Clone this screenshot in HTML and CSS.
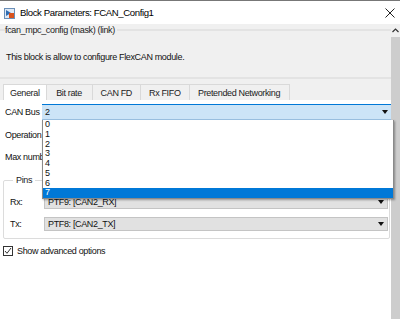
FILE: index.html
```html
<!DOCTYPE html>
<html>
<head>
<meta charset="utf-8">
<link rel="stylesheet" href="styles.css">
</head>
<body>
<div class="window">
  <div class="titlebar">
    <svg class="app-icon" width="11" height="11" viewBox="0 0 11 11">
      <rect x="0.5" y="0.5" width="10" height="10" fill="#dfe9f5" stroke="#6a8fb8"/>
      <path d="M2 2 L7 5 L2 8 Z" fill="#2f6db3"/>
      <rect x="5" y="5" width="5" height="5" fill="#d9531e"/>
    </svg>
    <span class="title">Block Parameters: FCAN_Config1</span>
    <svg class="close" width="10" height="10" viewBox="0 0 10 10">
      <path d="M0.5 0.5 L9.5 9.5 M9.5 0.5 L0.5 9.5" stroke="#222" stroke-width="1"/>
    </svg>
  </div>
  <div class="main">
    <div class="content">
      <div class="gray-area">
        <fieldset class="mask-group">
          <legend>fcan_mpc_config (mask) (link)</legend>
          <p class="desc">This block is allow to configure FlexCAN module.</p>
        </fieldset>
        <div class="tabs">
          <div class="tab active">General</div>
          <div class="tab">Bit rate</div>
          <div class="tab">CAN FD</div>
          <div class="tab">Rx FIFO</div>
          <div class="tab">Pretended Networking</div>
        </div>
      </div>
      <div class="panel">
        <div class="row row-canbus">
          <span class="label">CAN Bus</span>
          <div class="combo combo-active">
            <span>2</span>
            <span class="arrow"></span>
            <ul class="dropdown">
              <li>0</li>
              <li>1</li>
              <li>2</li>
              <li>3</li>
              <li>4</li>
              <li>5</li>
              <li>6</li>
              <li class="sel">7</li>
            </ul>
          </div>
        </div>
        <div class="row row-plain"><span class="label">Operation mode:</span></div>
        <div class="row row-plain"><span class="label">Max number of MBs:</span></div>
        <fieldset class="pins">
          <legend>Pins</legend>
          <div class="pin-row">
            <span class="pin-label">Rx:</span>
            <div class="combo combo-gray"><span>PTF9: [CAN2_RX]</span><span class="arrow"></span></div>
          </div>
          <div class="pin-row">
            <span class="pin-label">Tx:</span>
            <div class="combo combo-gray"><span>PTF8: [CAN2_TX]</span><span class="arrow"></span></div>
          </div>
        </fieldset>
        <label class="check">
          <span class="box">
            <svg width="8" height="8" viewBox="0 0 8 8"><path d="M1 4 L3 6.3 L7 1" fill="none" stroke="#333" stroke-width="1"/></svg>
          </span>
          <span>Show advanced options</span>
        </label>
      </div>
    </div>
    <div class="scrollbar">
      <div class="sb-up"><svg width="7" height="5" viewBox="0 0 7 5"><path d="M0.5 4 L3.5 1 L6.5 4" fill="none" stroke="#333" stroke-width="1.2"/></svg></div>
      <div class="sb-thumb"></div>
    </div>
  </div>
</div>
</body>
</html>
```

FILE: styles.css
```css
* { box-sizing: border-box; }
html, body { margin: 0; padding: 0; }
body {
  width: 400px;
  height: 319px;
  overflow: hidden;
  background: #fff;
  font-family: "Liberation Sans", Arial, sans-serif;
  font-size: 9px;
  letter-spacing: -0.35px;
  line-height: 10px;
  color: #111;
}
.window {
  width: 400px;
  height: 319px;
  display: flex;
  flex-direction: column;
  border-top: 1px solid #777;
}
.titlebar {
  height: 23px;
  flex: none;
  display: flex;
  align-items: center;
  padding: 0 0 0 4px;
  background: #fff;
}
.app-icon { flex: none; margin-right: 5px; margin-top: 1px; }
.title {
  font-size: 9.6px;
  letter-spacing: -0.4px;
  color: #000;
  flex: 1;
  margin-top: 1px;
}
.close { margin-right: 5px; margin-top: 1px; }
.main {
  flex: 1;
  display: flex;
  min-height: 0;
}
.content {
  flex: 1;
  display: flex;
  flex-direction: column;
  min-width: 0;
}
.gray-area {
  background: #f0f0f0;
  flex: none;
}
.mask-group {
  margin: 1px 0 0 0;
  border: none;
  border-top: 2px solid #e3e3e3;
  border-bottom: 2px solid #e3e3e3;
  padding: 0 6px;
  height: 54px;
  min-width: 0;
}
.mask-group legend {
  padding: 0 2px 0 0;
  margin-left: -1px;
  color: #222;
  line-height: 10px;
}
.desc { margin: 17px 0 0 0; }
.tabs {
  display: flex;
  padding: 5px 0 0 3px;
  height: 21px;
  align-items: flex-end;
}
.tab {
  height: 16px;
  padding: 0 8px;
  min-width: 46px;
  justify-content: center;
  border: 1px solid #d9d9d9;
  border-bottom: none;
  border-left: none;
  display: flex;
  align-items: center;
  background: #f0f0f0;
  color: #222;
}
.tab:first-child { border-left: 1px solid #d9d9d9; }
.tab.active {
  background: #fff;
  min-width: 43px;
  padding: 0 6px;
}
.tab:nth-child(3), .tab:nth-child(4) { min-width: 48px; }
.tab:nth-child(5) { min-width: 100px; }
.panel {
  flex: 1;
  background: #fff;
  position: relative;
  padding: 4px 0 0 0;
}
.row {
  display: flex;
  align-items: center;
  height: 16px;
  padding-left: 5px;
}
.row-plain { margin-top: 6px; }
.row-canbus + .row-plain { margin-top: 7px; }
.label { width: 37px; white-space: nowrap; flex: none; overflow: hidden; }
.combo {
  flex: 1;
  height: 16px;
  display: flex;
  align-items: center;
  padding-left: 3px;
  position: relative;
}
.combo-active {
  background: #cce4f7;
  border-top: 1px solid #0078d7;
  border-bottom: 1px solid #9cc3e5;
}
.arrow {
  margin-left: auto;
  margin-right: 3px;
  width: 0;
  height: 0;
  border-left: 3px solid transparent;
  border-right: 3px solid transparent;
  border-top: 4px solid #111;
}
.dropdown {
  position: absolute;
  left: 0;
  top: 15px;
  right: -3px;
  list-style: none;
  margin: 0;
  padding: 0;
  background: #fff;
  border: 1px solid #8a8a8a;
  border-top: none;
  box-shadow: 1px 1px 2px rgba(0,0,0,0.35);
  z-index: 5;
}
.dropdown li {
  height: 9.75px;
  line-height: 9.75px;
  padding-left: 2px;
  color: #111;
}
.dropdown li.sel { background: #0078d7; color: #fff; }
.pins {
  margin: 10px 1px 0 3px;
  border: 1px solid #dcdcdc;
  border-radius: 2px;
  padding: 0 0 0 6px;
  height: 64px;
  min-width: 0;
}
.pins legend {
  padding: 0 3px;
  margin-left: 3px;
  color: #222;
  line-height: 10px;
}
.pin-row {
  display: flex;
  align-items: center;
  height: 14px;
  margin-top: 10px;
}
.pin-row + .pin-row { margin-top: 8px; }
.pin-label { width: 34px; flex: none; }
.combo-gray {
  background: #e1e1e1;
  border: 1px solid #c4c4c4;
  height: 14px;
  margin-right: 1px;
}
.check {
  display: flex;
  align-items: center;
  margin: 7px 0 0 3px;
  gap: 4px;
}
.box {
  width: 10px;
  height: 10px;
  border: 1px solid #333;
  display: flex;
  align-items: center;
  justify-content: center;
  background: #fff;
}
.box svg { display: block; }
.scrollbar {
  width: 9px;
  flex: none;
  display: flex;
  flex-direction: column;
  background: #f0f0f0;
}
.sb-up {
  height: 13px;
  display: flex;
  align-items: center;
  justify-content: center;
}
.sb-thumb {
  flex: 1;
  background: #cdcdcd;
}
```
